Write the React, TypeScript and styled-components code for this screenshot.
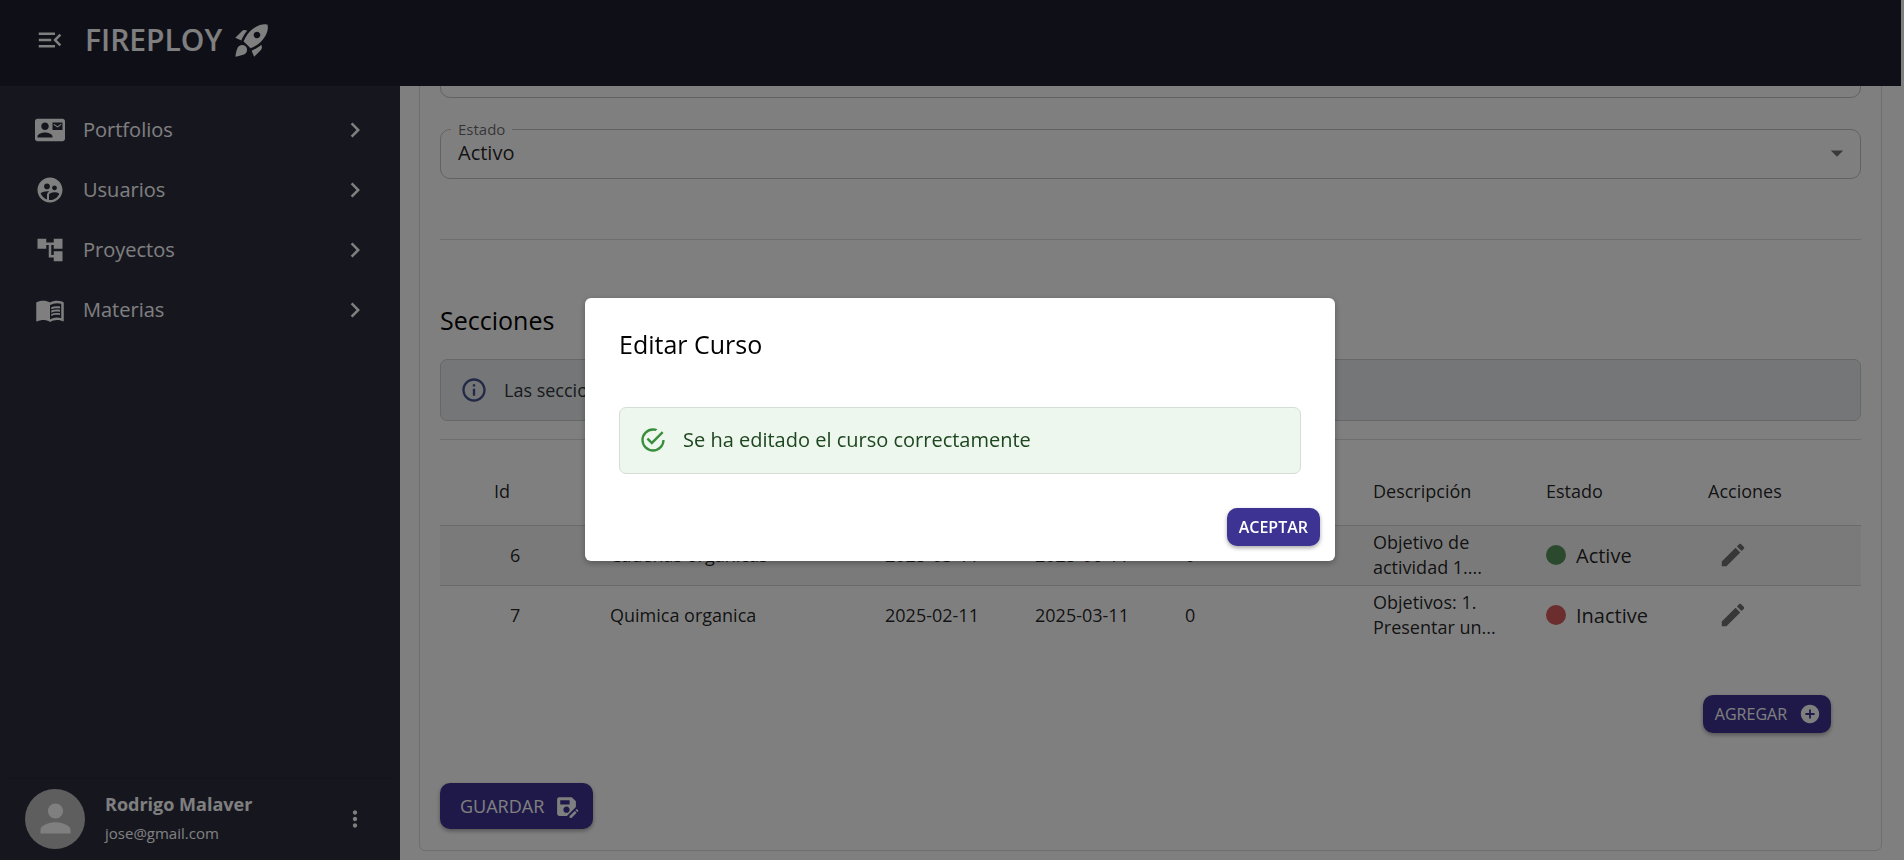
import React from "react";
import styled, { createGlobalStyle } from "styled-components";
import {
  MdAccountTree,
  MdAddCircle,
  MdArrowDropDown,
  MdChevronRight,
  MdContactMail,
  MdEdit,
  MdInfoOutline,
  MdMenuBook,
  MdMenuOpen,
  MdMoreVert,
  MdPerson,
  MdRocketLaunch,
  MdSaveAs,
  MdSupervisedUserCircle,
} from "react-icons/md";

const GlobalStyle = createGlobalStyle`
  *, *::before, *::after { box-sizing: border-box; }
  body {
    margin: 0;
    background: #fff;
    color: rgba(0, 0, 0, 0.87);
    font-family: "Open Sans", "Noto Sans", sans-serif;
    font-size: 18px;
    line-height: 24px;
  }
  button, select, textarea { font: inherit; color: inherit; }
  button { cursor: pointer; }
  svg { display: block; flex: none; }
`;

const Page = styled.div`
  display: flex;
  flex-direction: column;
  height: 100vh;
  overflow: hidden;
`;

const TopBar = styled.header`
  display: flex;
  align-items: center;
  flex: none;
  height: 86px;
  margin-right: 3px;
  padding: 0 35px 6px;
  background: #1f1f2f;
  color: #fff;
`;

const IconButton = styled.button`
  display: flex;
  align-items: center;
  justify-content: center;
  padding: 0;
  border: 0;
  background: none;
`;

const Brand = styled.div`
  display: flex;
  align-items: center;
  gap: 10px;
  margin-left: 20px;
  font-size: 30px;
  line-height: 40px;
  font-weight: 600;
`;

const Body = styled.div`
  display: flex;
  flex: 1;
  min-height: 0;
`;

const Sidebar = styled.aside`
  display: flex;
  flex-direction: column;
  justify-content: space-between;
  flex: none;
  width: 400px;
  padding: 14px 5px 0;
  background: #2c2c3e;
  color: #fff;
`;

const NavLink = styled.a`
  display: flex;
  align-items: center;
  gap: 18px;
  height: 60px;
  padding: 0 25px 0 30px;
  color: #fff;
  font-size: 20px;
  font-weight: 500;
  text-decoration: none;

  span { flex: 1; }
`;

const Account = styled.div`
  display: flex;
  align-items: center;
  gap: 20px;
  height: 82px;
  padding: 0 25px 2px 20px;
  border-top: 1px solid #262636;
`;

const Avatar = styled.div`
  display: flex;
  align-items: center;
  justify-content: center;
  width: 60px;
  height: 60px;
  border-radius: 50%;
  background: #bdbdbd;
`;

const AccountText = styled.div`
  display: flex;
  flex-direction: column;
  flex: 1;
  gap: 5px;
  font-size: 15px;

  strong { font-size: 18px; }
`;

const MoreButton = styled(IconButton)`
  width: 30px;
  height: 30px;
  color: #fff;
`;

const Main = styled.main`
  display: flex;
  flex-direction: column;
  justify-content: flex-end;
  flex: 1;
  min-width: 0;
  padding: 0 22px 9px 19px;
  overflow: hidden;
`;

const Card = styled.section`
  display: flex;
  flex-direction: column;
  flex: none;
  padding: 20px;
  border: 1px solid #dcdcdc;
  border-radius: 6px;
`;

const Description = styled.textarea`
  height: 120px;
  margin-bottom: 24px;
  padding: 12px 16px;
  border: 1px solid #c4c4c4;
  border-radius: 10px;
  background: none;
  resize: none;
`;

const Field = styled.fieldset`
  min-width: 0;
  height: 57px;
  margin: 0;
  padding: 2px 8px 0;
  border: 1px solid #c4c4c4;
  border-radius: 10px;

  legend {
    margin-left: 2px;
    padding: 0 7px;
    color: rgba(0, 0, 0, 0.6);
    font-size: 15px;
    line-height: 14px;
  }
`;

const SelectBox = styled.div`
  display: flex;
  align-items: center;
  color: rgba(0, 0, 0, 0.54);
`;

const Select = styled.select`
  flex: 1;
  height: 30px;
  padding: 0 9px;
  border: 0;
  background: none;
  color: rgba(0, 0, 0, 0.87);
  font-size: 20px;
  line-height: 30px;
  appearance: none;
`;

const Divider = styled.hr<{ $top: number; $bottom: number }>`
  width: 100%;
  height: 1px;
  margin: ${(p) => p.$top}px 0 ${(p) => p.$bottom}px;
  border: 0;
  background: #dcdcdc;
`;

const Heading = styled.h2`
  margin: 0;
  color: #000;
  font-size: 25px;
  line-height: 32px;
  font-weight: 500;
`;

const Alert = styled.div<{ $tone: "info" | "success" }>`
  display: flex;
  align-items: center;
  gap: 16px;
  height: ${(p) => (p.$tone === "info" ? 62 : 67)}px;
  padding: 0 19px;
  border: 1px solid ${(p) => (p.$tone === "info" ? "#ccced0" : "#d6dcd6")};
  border-radius: 7px;
  background: ${(p) => (p.$tone === "info" ? "#e9edf1" : "#edf7ed")};
  color: ${(p) => (p.$tone === "info" ? "#30343a" : "#1e4620")};
  font-size: ${(p) => (p.$tone === "info" ? 18 : 20)}px;

  svg { color: ${(p) => (p.$tone === "info" ? "#44528a" : "#388e3c")}; }
`;

const InfoSection = styled.div`
  margin-top: 23px;
`;

const Table = styled.table`
  width: 100%;
  border-collapse: collapse;
  table-layout: fixed;

  th, td { padding: 0 10px; text-align: left; font-weight: 400; line-height: 25px; }
  th:first-child { padding-left: 54px; }
  td:first-child { padding-left: 70px; }
  th { height: 85px; padding-top: 19px; }
  tbody tr { height: 60px; border-top: 1px solid #d4d4d4; }
  tbody tr:first-child { background: #f4f4f4; }
  td { height: 60px; }
`;

const Col = styled.col<{ $width: string }>`
  width: ${(p) => p.$width};
`;

const Clamp = styled.div`
  display: -webkit-box;
  overflow: hidden;
  -webkit-box-orient: vertical;
  -webkit-line-clamp: 2;
`;

const Status = styled.div<{ $active: boolean }>`
  display: flex;
  align-items: center;
  gap: 10px;
  font-size: 20px;

  &::before {
    content: "";
    width: 20px;
    height: 20px;
    border-radius: 50%;
    background: ${(p) => (p.$active ? "#57935a" : "#d75a5a")};
  }
`;

const EditButton = styled(IconButton)`
  width: 50px;
  height: 50px;
  color: #707070;
`;

const Action = styled.button<{ $size?: "large"; $strong?: boolean }>`
  display: flex;
  align-items: center;
  gap: ${(p) => (p.$size === "large" ? 10 : 12)}px;
  height: ${(p) => (p.$size === "large" ? 46 : 38)}px;
  padding: 0 ${(p) => (p.$size === "large" ? 14 : 12)}px 0 ${(p) => (p.$size === "large" ? 20 : 12)}px;
  border: 0;
  border-radius: 10px;
  background: #3d3393;
  color: #fff;
  box-shadow: 0 2px 4px rgba(0, 0, 0, 0.35);
  font-size: ${(p) => (p.$size === "large" ? 18 : 16)}px;
  font-weight: ${(p) => (p.$strong ? 600 : 500)};
`;

const AddButton = styled(Action)`
  padding-right: 10px;
`;

const AddRow = styled.div`
  display: flex;
  justify-content: flex-end;
  padding: 50px 30px 50px 0;
`;

const SaveRow = styled.div`
  display: flex;
  padding-bottom: 1px;
`;

const Backdrop = styled.div`
  position: fixed;
  inset: 0;
  display: flex;
  align-items: center;
  justify-content: center;
  padding: 0 0 2px 16px;
  background: rgba(0, 0, 0, 0.5);
`;

const Dialog = styled.div`
  display: flex;
  flex-direction: column;
  width: 750px;
  padding: 30px 15px 15px;
  border-radius: 6px;
  background: #fff;
  box-shadow: 0 2px 6px rgba(0, 0, 0, 0.3);
`;

const DialogBody = styled.div`
  display: flex;
  flex-direction: column;
  gap: 47px;
  padding: 0 19px 34px;
`;

const DialogActions = styled.div`
  display: flex;
  justify-content: flex-end;
`;

const SuccessIcon = () => (
  <svg width="28" height="28" viewBox="0 0 24 24" fill="currentColor" aria-hidden="true">
    <path d="M20,12A8,8 0 0,1 12,20A8,8 0 0,1 4,12A8,8 0 0,1 12,4C12.76,4 13.5,4.11 14.2,4.31L15.77,2.74C14.61,2.26 13.34,2 12,2A10,10 0 0,0 2,12A10,10 0 0,0 12,22A10,10 0 0,0 22,12M7.91,10.08L6.5,11.5L11,16L21,6L19.59,4.58L11,13.17L7.91,10.08Z" />
  </svg>
);

const navItems = [
  { label: "Portfolios", Icon: MdContactMail },
  { label: "Usuarios", Icon: MdSupervisedUserCircle },
  { label: "Proyectos", Icon: MdAccountTree },
  { label: "Materias", Icon: MdMenuBook },
];

const columns = [
  { label: "Id", width: "160px" },
  { label: "Título", width: "275px" },
  { label: "Inicio", width: "150px" },
  { label: "Fin", width: "150px" },
  { label: "Proyectos", width: "188px" },
  { label: "Descripción", width: "173px" },
  { label: "Estado", width: "162px" },
  { label: "Acciones", width: "auto" },
];

const rows = [
  { id: 6, title: "Cadenas organicas", start: "2025-03-11", end: "2025-06-11", count: 0, text: "Objetivo de actividad 1....", active: true },
  { id: 7, title: "Quimica organica", start: "2025-02-11", end: "2025-03-11", count: 0, text: "Objetivos: 1. Presentar un...", active: false },
];

export default function App() {
  return (
    <>
      <GlobalStyle />
      <Page>
        <TopBar>
          <IconButton aria-label="Menú"><MdMenuOpen size={30} /></IconButton>
          <Brand>FIREPLOY <MdRocketLaunch size={40} /></Brand>
        </TopBar>
        <Body>
          <Sidebar>
            <nav>
              {navItems.map(({ label, Icon }) => (
                <NavLink href="#" key={label}>
                  <Icon size={30} />
                  <span>{label}</span>
                  <MdChevronRight size={30} />
                </NavLink>
              ))}
            </nav>
            <Account>
              <Avatar><MdPerson size={45} /></Avatar>
              <AccountText>
                <strong>Rodrigo Malaver</strong>
                <span>jose@gmail.com</span>
              </AccountText>
              <MoreButton aria-label="Opciones"><MdMoreVert size={26} /></MoreButton>
            </Account>
          </Sidebar>
          <Main>
            <Card>
              <Description aria-label="Descripción" />
              <Field>
                <legend><label htmlFor="estado">Estado</label></legend>
                <SelectBox>
                  <Select id="estado" defaultValue="Activo">
                    <option>Activo</option>
                    <option>Inactivo</option>
                  </Select>
                  <MdArrowDropDown size={30} />
                </SelectBox>
              </Field>
              <Divider $top={60} $bottom={64} />
              <Heading>Secciones</Heading>
              <InfoSection>
                <Alert $tone="info">
                  <MdInfoOutline size={28} />
                  Las secciones organizan el contenido del curso
                </Alert>
              </InfoSection>
              <Divider $top={18} $bottom={0} />
              <Table>
                <colgroup>
                  {columns.map((c) => <Col key={c.label} $width={c.width} />)}
                </colgroup>
                <thead>
                  <tr>{columns.map((c) => <th key={c.label} scope="col">{c.label}</th>)}</tr>
                </thead>
                <tbody>
                  {rows.map((r) => (
                    <tr key={r.id}>
                      <td>{r.id}</td>
                      <td>{r.title}</td>
                      <td>{r.start}</td>
                      <td>{r.end}</td>
                      <td>{r.count}</td>
                      <td><Clamp>{r.text}</Clamp></td>
                      <td><Status $active={r.active}>{r.active ? "Active" : "Inactive"}</Status></td>
                      <td><EditButton aria-label="Editar"><MdEdit size={30} /></EditButton></td>
                    </tr>
                  ))}
                </tbody>
              </Table>
              <AddRow><AddButton>AGREGAR <MdAddCircle size={22} /></AddButton></AddRow>
              <SaveRow><Action $size="large">GUARDAR <MdSaveAs size={25} /></Action></SaveRow>
            </Card>
          </Main>
        </Body>
      </Page>
      <Backdrop>
        <Dialog role="dialog" aria-modal="true" aria-labelledby="dialog-title">
          <DialogBody>
            <Heading id="dialog-title">Editar Curso</Heading>
            <Alert $tone="success" role="alert">
              <SuccessIcon />
              Se ha editado el curso correctamente
            </Alert>
          </DialogBody>
          <DialogActions><Action $strong>ACEPTAR</Action></DialogActions>
        </Dialog>
      </Backdrop>
    </>
  );
}
